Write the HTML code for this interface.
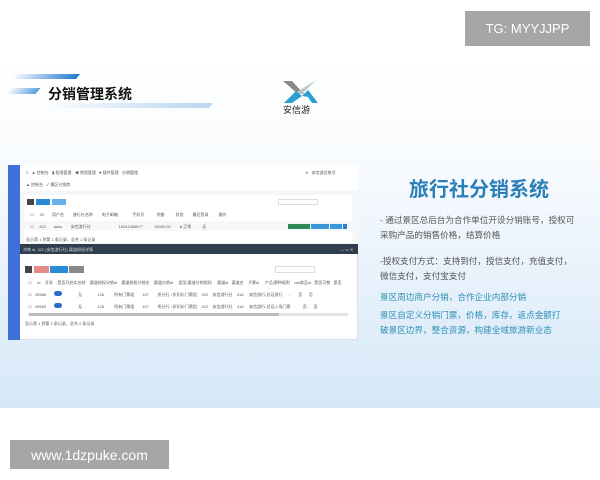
<!DOCTYPE html>
<html><head><meta charset="utf-8"><style>
*{margin:0;padding:0;box-sizing:border-box}
body{width:600px;height:480px;background:#fff;position:relative;overflow:hidden;font-family:"Liberation Sans","Noto Sans CJK SC",sans-serif}
.a{position:absolute}
.slide{left:0;top:60px;width:600px;height:348px;background:linear-gradient(180deg,#fff 0%,#f8fbfe 30%,#e6f1fb 65%,#d6e8f8 100%)}
.wm{background:#a6a6a6;color:#fff;font-size:13px;display:flex;align-items:center;justify-content:center}
.t{font-size:4px;color:#555;white-space:nowrap}
.tr{font-size:8.6px;color:#555;line-height:15px}
.tb{font-size:8.6px;color:#2d8fb3;line-height:15px;white-space:nowrap}
</style></head><body>
<div class="a slide"></div>
<div class="a wm" style="left:465px;top:11px;width:125px;height:35px">TG: MYYJJPP</div>
<div class="a wm" style="left:10px;top:440px;width:159px;height:29px;font-size:14px">www.1dzpuke.com</div>
<div class="a" style="left:12px;top:74px;width:66px;height:5px;background:linear-gradient(90deg,rgba(30,120,210,0),#1e78d2);transform:skewX(-40deg)"></div>
<div class="a" style="left:8px;top:88px;width:30px;height:6px;background:linear-gradient(90deg,rgba(80,150,220,0),#5a9ee0);transform:skewX(-40deg)"></div>
<div class="a" style="left:46px;top:103px;width:165px;height:5px;background:linear-gradient(90deg,rgba(180,210,240,0),#b8d6f0);transform:skewX(-40deg)"></div>
<div class="a" style="left:48px;top:84px;font-size:14px;font-weight:bold;color:#111">分销管理系统</div>
<svg class="a" style="left:280px;top:78px" width="42" height="26" viewBox="0 0 42 26">
<path d="M3 3 L12 3 L24 16 L18 16 Z" fill="#8a8a8a"/>
<path d="M14 16 L36 2 L22 16 Z" fill="#b9c8d0"/>
<path d="M4 25 L16 13 L22 18 L12 25 Z M22 18 L28 12 L38 25 L32 25 L28 19 Z" fill="#2a9fd0"/>
</svg>
<div class="a" style="left:283px;top:103px;font-size:9px;color:#222">安信游</div>
<div class="a" style="left:8px;top:165px;width:350px;height:175px;background:#fff;border:1px solid #dde"></div>
<div class="a" style="left:8px;top:165px;width:12px;height:175px;background:#3f6fd8"></div>
<div class="a" style="left:20px;top:165px;width:338px;height:30px;background:#fff"></div>
<div class="a t" style="left:26px;top:170px">≡ &nbsp; ▲ 控制台 &nbsp; ▮ 权限管理 &nbsp; ◀ 常规管理 &nbsp; ♥ 插件管理 &nbsp; 分销管理</div>
<div class="a t" style="left:305px;top:170px">✕ &nbsp; 安信游总账号</div>
<div class="a t" style="left:26px;top:182px">▲ 控制台 &nbsp; ✓ 景区分销商</div>
<div class="a" style="left:20px;top:191px;width:338px;height:53px;background:#f4f6f8"></div>
<div class="a" style="left:24px;top:195px;width:328px;height:48px;background:#fff"></div>
<div class="a" style="left:27px;top:199px;width:7px;height:6px;background:#444"></div>
<div class="a" style="left:36px;top:199px;width:14px;height:6px;background:#2b8ad6"></div>
<div class="a" style="left:52px;top:199px;width:14px;height:6px;background:#6ab0e8"></div>
<div class="a" style="left:278px;top:199px;width:40px;height:6px;border:1px solid #ddd"></div>
<div class="a t" style="left:30px;top:212px">☐ &nbsp;&nbsp;&nbsp;&nbsp; ID &nbsp;&nbsp;&nbsp;&nbsp;&nbsp; 用户名 &nbsp;&nbsp;&nbsp;&nbsp;&nbsp;&nbsp; 旅行社名称 &nbsp;&nbsp;&nbsp;&nbsp;&nbsp;&nbsp; 电子邮箱 &nbsp;&nbsp;&nbsp;&nbsp;&nbsp;&nbsp;&nbsp;&nbsp;&nbsp;&nbsp;&nbsp; 手机号 &nbsp;&nbsp;&nbsp;&nbsp;&nbsp;&nbsp;&nbsp;&nbsp;&nbsp; 余额 &nbsp;&nbsp;&nbsp;&nbsp;&nbsp;&nbsp;&nbsp;&nbsp; 状态 &nbsp;&nbsp;&nbsp;&nbsp;&nbsp;&nbsp; 最后登录 &nbsp;&nbsp;&nbsp;&nbsp;&nbsp;&nbsp;&nbsp; 操作</div>
<div class="a" style="left:24px;top:221px;width:328px;height:10px;background:#f7f8f9"></div>
<div class="a t" style="left:30px;top:224px">☐ &nbsp;&nbsp;&nbsp; 322 &nbsp;&nbsp;&nbsp;&nbsp;&nbsp; asks &nbsp;&nbsp;&nbsp;&nbsp;&nbsp;&nbsp; 安信游行社 &nbsp;&nbsp;&nbsp;&nbsp;&nbsp;&nbsp;&nbsp;&nbsp;&nbsp;&nbsp;&nbsp;&nbsp;&nbsp;&nbsp;&nbsp;&nbsp;&nbsp;&nbsp;&nbsp;&nbsp;&nbsp;&nbsp;&nbsp; 15244356677 &nbsp;&nbsp;&nbsp;&nbsp;&nbsp;&nbsp;&nbsp;&nbsp; 10000.00 &nbsp;&nbsp;&nbsp;&nbsp;&nbsp;&nbsp; ● 正常 &nbsp;&nbsp;&nbsp;&nbsp;&nbsp;&nbsp;&nbsp;&nbsp; 无</div>
<div class="a" style="left:288px;top:224px;width:22px;height:5px;background:#2e8b57"></div>
<div class="a" style="left:311px;top:224px;width:18px;height:5px;background:#3a9ad9"></div>
<div class="a" style="left:330px;top:224px;width:12px;height:5px;background:#3a9ad9"></div>
<div class="a" style="left:343px;top:224px;width:4px;height:5px;background:#2b7bd6"></div>
<div class="a t" style="left:26px;top:237px">显示第 1 到第 1 条记录，总共 1 条记录</div>
<div class="a" style="left:20px;top:244px;width:338px;height:10px;background:#2f3e4c"></div>
<div class="a t" style="left:23px;top:247px;color:#ddd">济南 id: 322 (安信游行社) 渠道授权详情</div>
<div class="a t" style="left:340px;top:247px;color:#ddd">— ▭ ✕</div>
<div class="a" style="left:25px;top:266px;width:7px;height:7px;background:#444"></div>
<div class="a" style="left:34px;top:266px;width:15px;height:7px;background:#e58a8a"></div>
<div class="a" style="left:50px;top:266px;width:18px;height:7px;background:#2b8ad6"></div>
<div class="a" style="left:69px;top:266px;width:15px;height:7px;background:#888"></div>
<div class="a" style="left:275px;top:266px;width:40px;height:7px;border:1px solid #ddd"></div>
<div class="a t" style="left:28px;top:280px">☐ &nbsp;&nbsp;&nbsp; Id &nbsp;&nbsp; 开关 &nbsp;&nbsp; 是否开启实名制 &nbsp;&nbsp; 渠道授权分销id &nbsp;&nbsp; 渠道授权分销名 &nbsp;&nbsp; 渠道分销id &nbsp;&nbsp;&nbsp; 类型/渠道分销规则 &nbsp;&nbsp;&nbsp; 渠道id &nbsp; 渠道名 &nbsp;&nbsp; 子景id &nbsp;&nbsp;&nbsp; 产品/票种规则 &nbsp;&nbsp; ota商品id &nbsp; 是否可售 &nbsp; 是否</div>
<div class="a t" style="left:28px;top:292px">☐ &nbsp; 25566</div>
<div class="a t" style="left:28px;top:304px">☐ &nbsp; 25565</div>
<div class="a" style="left:54px;top:291px;width:8px;height:5px;border-radius:3px;background:#2b6fc4"></div>
<div class="a" style="left:54px;top:303px;width:8px;height:5px;border-radius:3px;background:#2b6fc4"></div>
<div class="a t" style="left:78px;top:292px">无 &nbsp;&nbsp;&nbsp;&nbsp;&nbsp;&nbsp;&nbsp;&nbsp;&nbsp;&nbsp;&nbsp;&nbsp; 126 &nbsp;&nbsp;&nbsp;&nbsp;&nbsp;&nbsp;&nbsp; 所有门票组 &nbsp;&nbsp;&nbsp;&nbsp;&nbsp; 127 &nbsp;&nbsp;&nbsp;&nbsp;&nbsp;&nbsp; 所分行 / 折扣价门票组 &nbsp;&nbsp; 322 &nbsp;&nbsp; 安信游行社 &nbsp;&nbsp; 416 &nbsp;&nbsp;&nbsp; 安信游行-总证游行 &nbsp;&nbsp;&nbsp;&nbsp; - &nbsp;&nbsp;&nbsp;&nbsp;&nbsp; 否 &nbsp;&nbsp;&nbsp;&nbsp; 否</div>
<div class="a t" style="left:78px;top:304px">无 &nbsp;&nbsp;&nbsp;&nbsp;&nbsp;&nbsp;&nbsp;&nbsp;&nbsp;&nbsp;&nbsp;&nbsp; 126 &nbsp;&nbsp;&nbsp;&nbsp;&nbsp;&nbsp;&nbsp; 所有门票组 &nbsp;&nbsp;&nbsp;&nbsp;&nbsp; 127 &nbsp;&nbsp;&nbsp;&nbsp;&nbsp;&nbsp; 所分行 / 折扣价门票组 &nbsp;&nbsp; 322 &nbsp;&nbsp; 安信游行社 &nbsp;&nbsp; 416 &nbsp;&nbsp;&nbsp; 安信游行-总证入场门票 &nbsp; - &nbsp;&nbsp;&nbsp;&nbsp;&nbsp; 否 &nbsp;&nbsp;&nbsp;&nbsp; 否</div>
<div class="a" style="left:28px;top:313px;width:320px;height:3px;background:#e4e4e4"></div>
<div class="a" style="left:29px;top:313px;width:250px;height:3px;background:#bbb"></div>
<div class="a t" style="left:25px;top:321px">显示第 1 到第 2 条记录，总共 2 条记录</div>
<div class="a" style="left:409px;top:173px;font-size:20px;color:#2a7fb8;font-weight:bold">旅行社分销系统</div>
<div class="a tr" style="left:380px;top:213px;width:200px">- 通过景区总后台为合作单位开设分销账号，授权可采购产品的销售价格，结算价格</div>
<div class="a tr" style="left:380px;top:254px;width:200px">-授权支付方式：支持到付，授信支付，充值支付，微信支付，支付宝支付</div>
<div class="a tb" style="left:380px;top:290px">景区周边商户分销，合作企业内部分销</div>
<div class="a tb" style="left:380px;top:308px">景区自定义分销门票，价格，库存，返点金额打<br>破景区边界，整合资源，构建全域旅游新业态</div>
</body></html>
